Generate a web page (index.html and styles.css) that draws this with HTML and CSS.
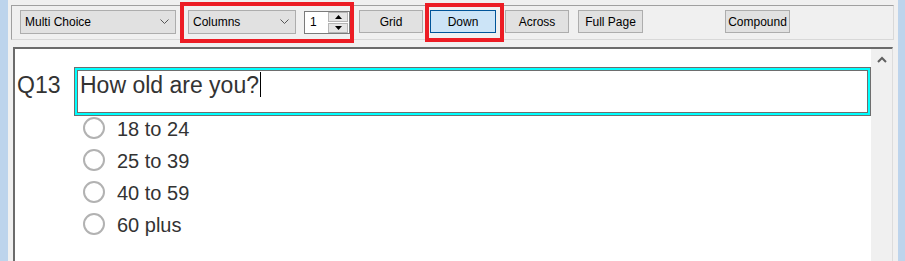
FILE: index.html
```html
<!DOCTYPE html>
<html>
<head>
<meta charset="utf-8">
<link rel="stylesheet" href="styles.css">
</head>
<body>
<div class="edge"></div>
<div class="main">
  <div class="toolbar">
    <div class="select sel-type"><span>Multi Choice</span><svg class="chev" width="9" height="6" viewBox="0 0 9 6"><polyline points="0.5,0.5 4.5,4.5 8.5,0.5" fill="none" stroke="#555" stroke-width="1"/></svg></div>
    <div class="mark mark-a">
      <div class="select sel-layout"><span>Columns</span><svg class="chev" width="9" height="6" viewBox="0 0 9 6"><polyline points="0.5,0.5 4.5,4.5 8.5,0.5" fill="none" stroke="#555" stroke-width="1"/></svg></div>
      <div class="spin">
        <span class="spin-val">1</span>
        <div class="spin-btns">
          <div class="spin-btn"><svg width="7" height="4" viewBox="0 0 7 4"><polygon points="0,4 3.5,0 7,4" fill="#000"/></svg></div>
          <div class="spin-btn"><svg width="7" height="4" viewBox="0 0 7 4"><polygon points="0,0 3.5,4 7,0" fill="#000"/></svg></div>
        </div>
      </div>
    </div>
    <button class="btn btn-grid">Grid</button>
    <div class="mark mark-b"><button class="btn btn-down">Down</button></div>
    <button class="btn btn-across">Across</button>
    <button class="btn btn-full">Full Page</button>
    <button class="btn btn-compound">Compound</button>
  </div>
  <div class="panel">
    <div class="content">
      <div class="qrow">
        <div class="qnum">Q13</div>
        <div class="qbox">How old are you?<span class="caret"></span></div>
      </div>
      <div class="options">
        <div class="opt"><span class="radio"></span><span class="opt-label">18 to 24</span></div>
        <div class="opt"><span class="radio"></span><span class="opt-label">25 to 39</span></div>
        <div class="opt"><span class="radio"></span><span class="opt-label">40 to 59</span></div>
        <div class="opt"><span class="radio"></span><span class="opt-label">60 plus</span></div>
      </div>
    </div>
    <div class="scrollbar">
      <div class="sb-up"><svg width="10" height="7" viewBox="0 0 10 7"><polyline points="1,6 5,2 9,6" fill="none" stroke="#606060" stroke-width="2"/></svg></div>
    </div>
  </div>
</div>
<div class="edge edge-right"></div>
</body>
</html>
```
FILE: styles.css
```css
* { box-sizing: border-box; }
html, body { margin: 0; padding: 0; }
body {
  width: 905px;
  height: 261px;
  overflow: hidden;
  display: flex;
  background: #f0f0f0;
  font-family: "Liberation Sans", Arial, sans-serif;
}
.edge { width: 8px; background: #bdd4ec; flex: none; }
.edge-right { width: 7px; }
.main { flex: 1; display: flex; flex-direction: column; min-width: 0; }

.toolbar {
  margin: 5px 0 0 3px;
  width: 883px;
  height: 35px;
  flex: none;
  border-top: 1px solid #a0a0a0;
  border-left: 1px solid #a0a0a0;
  border-right: 1px solid #d8d8d8;
  border-bottom: 1px solid #d8d8d8;
  display: flex;
  align-items: flex-start;
}
.select {
  height: 24px;
  background: #e1e1e1;
  border: 1px solid #adadad;
  display: flex;
  align-items: center;
  justify-content: space-between;
  padding: 0 6px 0 4px;
  font-size: 12px;
  color: #000;
}
.sel-type { width: 156px; margin: 4px 0 0 8px; }
.sel-layout { width: 108px; }
.chev { display: block; }

.mark { border: 4px solid #ec1c24; display: flex; align-items: flex-start; }
.mark-a { margin: -4px 0 0 4px; padding: 4px 0 5px 4px; gap: 8px; height: 41px; }
.mark-b { margin: -3px 0 0 2px; padding: 3px 4px 5px 1px; height: 39px; }

.spin {
  width: 46px;
  height: 23px;
  margin-top: 1px;
  background: #fff;
  border: 1px solid #7a7a7a;
  display: flex;
  justify-content: space-between;
  font-size: 12px;
}
.spin-val { padding: 3px 0 0 5px; }
.spin-btns { display: flex; flex-direction: column; gap: 1px; padding: 0 1px 0 0; width: 21px; }
.spin-btn {
  flex: 1;
  background: #e5e5e5;
  border: 1px solid #b5b5b5;
  display: flex;
  align-items: center;
  justify-content: center;
}
.spin-btn svg { display: block; }

.btn {
  height: 23px;
  margin: 4px 0 0 0;
  padding: 0;
  background: #e1e1e1;
  border: 1px solid #adadad;
  font-family: "Liberation Sans", Arial, sans-serif;
  font-size: 12px;
  color: #000;
  flex: none;
}
.btn-grid { width: 64px; margin-left: 5px; }
.btn-down { width: 66px; margin: 0; background: #cce4f7; border-color: #005499; }
.btn-across { width: 64px; margin-left: 1px; }
.btn-full { width: 65px; margin-left: 9px; }
.btn-compound { width: 65px; margin-left: 82px; }

.panel {
  margin: 7px 0 0 5px;
  width: 880px;
  flex: 1;
  border-top: 2px solid #6b6b6b;
  border-left: 2px solid #6b6b6b;
  border-right: 1px solid #dcdcdc;
  display: flex;
}
.content { flex: 1; background: #fff; padding: 18px 0 0 2px; color: #333; }
.qrow { display: flex; align-items: baseline; }
.qnum { width: 57px; font-size: 23px; flex: none; }
.qbox {
  flex: 1;
  height: 49px;
  border: 1px solid #6e6e6e;
  box-shadow: inset 0 0 0 2px #00ffff, inset 0 0 0 3px #6e6e6e;
  padding: 4px 0 0 5px;
  font-size: 23px;
  line-height: 26px;
}
.caret {
  display: inline-block;
  width: 1px;
  height: 25px;
  background: #000;
  vertical-align: top;
  margin-left: 1px;
}
.options { padding-left: 66px; }
.opt { display: flex; align-items: flex-start; height: 32px; }
.radio {
  width: 22px;
  height: 22px;
  margin-top: 1px;
  border: 2px solid #b2b2b2;
  border-radius: 50%;
  flex: none;
}
.opt-label { margin-left: 12px; padding-top: 2px; font-size: 20px; line-height: 22px; color: #333; }

.scrollbar { width: 21px; background: #f0f0f0; flex: none; }
.sb-up { height: 21px; display: flex; align-items: center; justify-content: center; }
.sb-up svg { display: block; }
```
